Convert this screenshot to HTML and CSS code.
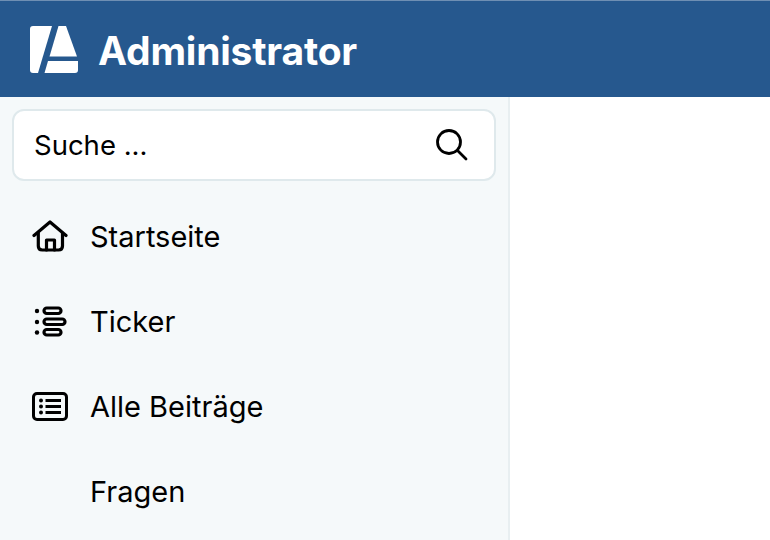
FILE: index.html
```html
<!DOCTYPE html>
<html lang="de">
<head>
  <meta charset="UTF-8">
  <title>Administrator</title>
  <link rel="stylesheet" href="styles.css">
</head>
<body>
  <header class="topbar">
    <svg class="logo" width="48" height="49" viewBox="0 0 48 49" aria-hidden="true">
      <path d="M3 0H22L8 47H3Q0 47 0 44V3Q0 0 3 0Z" fill="#fff"/>
      <path d="M28.500 0H36L47 30.500H19.500Z" fill="#fff"/>
      <path d="M18 35H48V44Q48 47 45 47H14.500Z" fill="#fff"/>
    </svg>
    <span class="brand">Administrator</span>
  </header>

  <div class="layout">
    <nav class="sidebar">
      <div class="search">
        <span>Suche ...</span>
        <svg width="36" height="36" viewBox="0 0 36 36" fill="none" stroke="#000" stroke-width="2.8" stroke-linecap="round" aria-hidden="true">
          <circle cx="16" cy="15" r="11.5"/>
          <path d="M24.5 23.5L33 32"/>
        </svg>
      </div>

      <ul class="menu">
        <li class="menu-item">
          <svg width="38" height="34" viewBox="0 0 38 34" fill="none" stroke="#000" stroke-width="3.2" stroke-linecap="round" stroke-linejoin="round" aria-hidden="true">
            <path d="M3 15.500L19 2L35 15.500"/>
            <path d="M7.300 13V26Q7.300 30 11.300 30H27.500Q31.500 30 31.500 26V13"/>
            <path d="M15.500 30V20H23.500V30"/>
          </svg>
          <span>Startseite</span>
        </li>
        <li class="menu-item">
          <svg width="38" height="34" viewBox="0 0 38 34" fill="none" stroke="#000" stroke-width="3.2" aria-hidden="true">
            <circle cx="6" cy="6" r="2.200" fill="#000" stroke="none"/>
            <circle cx="6" cy="17" r="2.200" fill="#000" stroke="none"/>
            <circle cx="6" cy="27.500" r="2.200" fill="#000" stroke="none"/>
            <rect x="13" y="3" width="17" height="5.500" rx="2.750"/>
            <rect x="13" y="14" width="21" height="5.500" rx="2.750"/>
            <rect x="13" y="24.500" width="17" height="5.500" rx="2.750"/>
          </svg>
          <span>Ticker</span>
        </li>
        <li class="menu-item">
          <svg width="38" height="34" viewBox="0 0 38 34" fill="none" stroke="#000" aria-hidden="true">
            <rect x="2.500" y="3.500" width="33" height="26" rx="3.500" stroke-width="3"/>
            <circle cx="10" cy="10.500" r="2" fill="#000" stroke="none"/>
            <circle cx="10" cy="16.500" r="2" fill="#000" stroke="none"/>
            <circle cx="10" cy="22.500" r="2" fill="#000" stroke="none"/>
            <path d="M14.500 10.500H30M14.500 16.500H30M14.500 22.500H30" stroke-width="2.800"/>
          </svg>
          <span>Alle Beiträge</span>
        </li>
        <li class="menu-item no-icon">
          <span>Fragen</span>
        </li>
      </ul>
    </nav>
    <main class="content"></main>
  </div>
</body>
</html>
```
FILE: styles.css
```css
/* Reset */
*, *::before, *::after {
  box-sizing: border-box;
}
html, body {
  margin: 0;
  padding: 0;
  height: 100%;
  overflow: hidden;
  font-family: Inter, 'Liberation Sans', sans-serif;
  background-color: #fff;
  color: #000;
}

/* Top bar */
.topbar {
  display: flex;
  align-items: center;
  height: 97px;
  padding: 2px 0 0 30px;
  background-color: #26588e;
  border-top: 1px solid #6f8fb3;
}
.logo {
  flex-shrink: 0;
  margin-right: 20px;
}
.brand {
  font-size: 39px;
  font-weight: 700;
  letter-spacing: -0.2px;
  color: #fff;
}

/* Layout */
.layout {
  display: flex;
  height: 443px;
}
.sidebar {
  width: 510px;
  padding: 12px 12px 0 12px;
  background-color: #f5f9fa;
  border-right: 2px solid #e8eff1;
}
.content {
  flex: 1;
}

/* Search */
.search {
  display: flex;
  align-items: center;
  justify-content: space-between;
  height: 72px;
  padding: 0 25px 0 20px;
  background-color: #fff;
  border: 2px solid #dfe9ec;
  border-radius: 12px;
  font-size: 27.5px;
}

/* Menu */
.menu {
  list-style: none;
  margin: 13px 0 0;
  padding: 0;
}
.menu-item {
  display: flex;
  align-items: center;
  gap: 21px;
  height: 85px;
  padding-left: 19px;
  font-size: 29px;
}
.menu-item.no-icon {
  padding-left: 78px;
}
```
